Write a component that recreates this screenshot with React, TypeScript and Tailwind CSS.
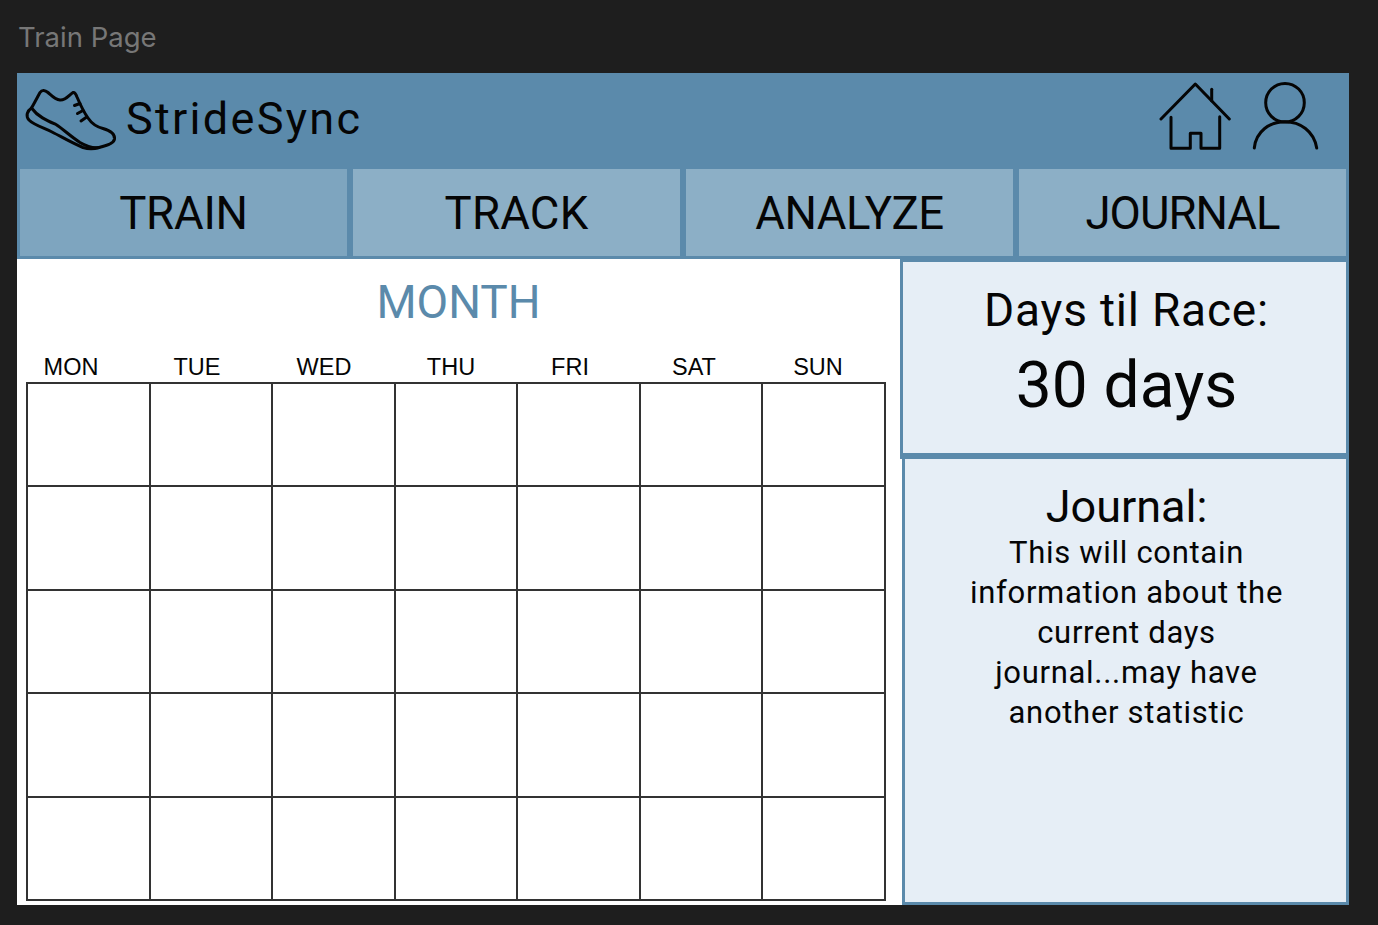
const tabs = [
  { label: "TRAIN", active: true, tracking: "tracking-[-0.2px]" },
  { label: "TRACK", active: false, tracking: "tracking-[0.2px]" },
  { label: "ANALYZE", active: false, tracking: "tracking-[-0.5px]" },
  { label: "JOURNAL", active: false, tracking: "tracking-[-1px]" },
];

const days = [
  { label: "MON", width: "w-[108px]" },
  { label: "TUE", width: "w-[144px]" },
  { label: "WED", width: "w-[110px]" },
  { label: "THU", width: "w-[144px]" },
  { label: "FRI", width: "w-[94px]" },
  { label: "SAT", width: "w-[154px]" },
  { label: "SUN", width: "w-[94px]" },
];

const journalLines = [
  "This will contain",
  "information about the",
  "current days",
  "journal...may have",
  "another statistic",
];

function ShoeIcon() {
  return (
    <svg width="100" height="75" viewBox="0 0 100 75" fill="none" stroke="#050505" strokeWidth="3" strokeLinecap="round" strokeLinejoin="round" className="shrink-0">
      <path d="M11.5 28 C15 22 18 16 20 12.5 C22 9.5 25 10 28 12.5 C32 16 35 19.5 40 20 C46 20.5 49 15 53 12.5 C55 12 56 14 57 17 C60 24 63 31 68 38 C72 44 77 47 83 48.5 C90 50.5 95 54 94.5 59 C94 63 88 65.5 79 67.5 C72 68.5 66 66 60 62.5 C50 56 43 49 36 44.5 C28 41 18 37 11.5 28 Z" />
      <path d="M11.5 28 C7 31 5.5 36 9 40 C14 45 24 48 32 52 C42 57 52 63 63 67.5 C68 69 74 69 79 67.5" />
      <path d="M54.5 25.5 L60 23.5 M57.5 33.5 L63 30.5 M61 41 L66 37.5" />
    </svg>
  );
}

function HomeIcon() {
  return (
    <svg width="75" height="75" viewBox="0 0 75 75" fill="none" stroke="#050505" strokeWidth="3" strokeLinecap="round" strokeLinejoin="round">
      <path d="M2 39 L36.3 4 L70.3 39" />
      <path d="M52.7 9.3 V20.7" />
      <path d="M12 37.3 V68.3 H31.3 V53.3 H42 V68.3 H60.7 V36.7" />
    </svg>
  );
}

function UserIcon() {
  return (
    <svg width="75" height="75" viewBox="0 0 75 75" fill="none" stroke="#050505" strokeWidth="3" strokeLinecap="round">
      <circle cx="35" cy="22.7" r="19.3" />
      <path d="M4.3 68 C6 51 20 41.7 35 41.7 C50 41.7 64 51 66.7 68" />
    </svg>
  );
}

export default function App() {
  return (
    <div className="h-[925px] overflow-hidden bg-[#1e1e1e] px-[17px] font-['Roboto',sans-serif]">
      <div className="flex h-[73px] items-start pt-[18px] pl-[1px] font-['Inter',sans-serif] text-[27.5px] leading-[38px] text-[#777777]">
        Train Page
      </div>

      <div className="flex h-[832px] w-[1332px] flex-col bg-[#5b8aab]">
        <header className="flex h-[96px] items-start">
          <div className="ml-[3px] mt-[7px]">
            <ShoeIcon />
          </div>
          <span className="mt-[18px] ml-[6px] text-[45px] leading-[56px] tracking-[2.3px] text-[#050505]">StrideSync</span>
          <div className="ml-auto mr-[24px] mt-[7px] flex gap-[16px]">
            <HomeIcon />
            <UserIcon />
          </div>
        </header>

        <nav className="grid h-[90px] grid-cols-4 gap-[6px] px-[3px] pb-[3px]">
          {tabs.map((tab) => (
            <div
              key={tab.label}
              className={`flex items-center justify-center pt-[2px] text-[45.5px] leading-none text-[#050505] ${tab.tracking} ${
                tab.active ? "bg-[#7ea5bf]" : "bg-[#8cafc6]"
              }`}
            >
              {tab.label}
            </div>
          ))}
        </nav>

        <div className="flex min-h-0 flex-1">
          <section className="w-[883px] bg-white">
            <h1 className="pt-[16px] text-center text-[46px] leading-[54px] font-normal text-[#5b8aab]">MONTH</h1>
            <div className="mt-[25px] flex h-[28px] items-center font-['Liberation_Sans',sans-serif] text-[23.5px] leading-none text-[#050505]">
              {days.map((day) => (
                <div key={day.label} className={`${day.width} text-center`}>
                  {day.label}
                </div>
              ))}
            </div>
            <div className="ml-[9px] grid h-[519px] w-[860px] grid-cols-7 grid-rows-5 border-t-2 border-l-2 border-[#333333]">
              {Array.from({ length: 35 }).map((_, i) => (
                <div key={i} className="border-r-2 border-b-2 border-[#333333]" />
              ))}
            </div>
          </section>

          <aside className="flex w-[449px] flex-col bg-white">
            <div className="flex h-[200px] flex-col items-center border-b-[6px] border-l-[3px] border-r-[3px] border-t-[3px] border-[#5b8aab] bg-[#e6eef6] pl-[4px] text-[#050505]">
              <div className="mt-[21px] text-[46px] leading-[54px] tracking-[0.8px]">Days til Race:</div>
              <div className="mt-[11px] text-[64px] leading-[76px]">30 days</div>
            </div>
            <div className="ml-[2px] flex flex-1 flex-col items-center border-[3px] border-t-0 border-[#5b8aab] bg-[#e6eef6] pl-[2px] text-[#050505]">
              <div className="mt-[21px] text-[45px] leading-[54px]">Journal:</div>
              <div className="-mt-[1px] text-center text-[31px] leading-[40px] tracking-[0.7px]">
                {journalLines.map((line) => (
                  <div key={line}>{line}</div>
                ))}
              </div>
            </div>
          </aside>
        </div>
      </div>
    </div>
  );
}
